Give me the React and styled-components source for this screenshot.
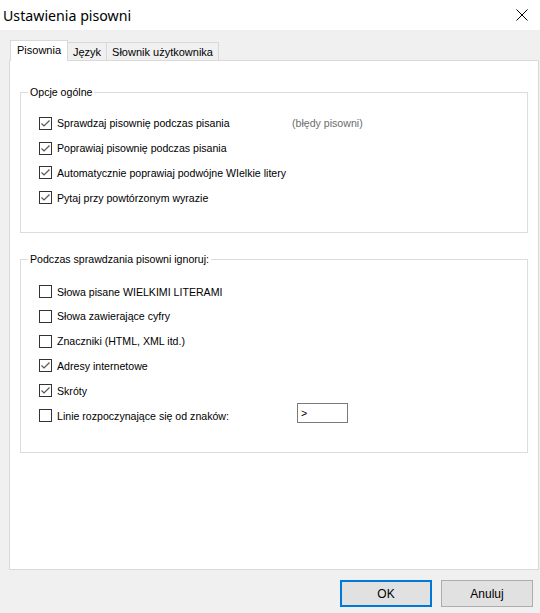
import styled, { createGlobalStyle } from 'styled-components';

const GlobalStyle = createGlobalStyle`
	body {
		margin: 0;
		font-family: "Liberation Sans", Arial, sans-serif;
		font-size: 10.6px;
		color: #000;
	}
`;

const Window = styled.div`
	width: 540px;
	height: 613px;
	background: #f0f0f0;
	display: flex;
	flex-direction: column;
`;

const TitleBar = styled.div`
	height: 30px;
	background: #ffffff;
	display: flex;
	align-items: center;
	justify-content: space-between;
	padding-left: 3px;
	flex-shrink: 0;

	h1 {
		margin: 0;
		font-family: "Noto Sans", "Open Sans", sans-serif;
		font-weight: 400;
		font-size: 14.2px;
		color: #000;
	}
`;

const CloseBtn = styled.div`
	width: 46px;
	height: 30px;
	display: flex;
	align-items: center;
	justify-content: center;
	margin-right: -5px;
`;

const Body = styled.div`
	flex: 1;
	display: flex;
	flex-direction: column;
	padding: 10px 1px 0 9px;
`;

const TabStrip = styled.div`
	height: 20px;
	display: flex;
	align-items: flex-end;
	padding-left: 1px;
`;

const Tab = styled.div`
	position: relative;
	z-index: ${(p) => (p.$active ? 1 : 0)};
	box-sizing: border-box;
	width: ${(p) => p.$w}px;
	height: ${(p) => (p.$active ? 21 : 18)}px;
	margin-bottom: ${(p) => (p.$active ? -1 : 0)}px;
	background: ${(p) => (p.$active ? '#ffffff' : '#f0f0f0')};
	border: 1px solid #d9d9d9;
	border-bottom: none;
	border-left: ${(p) => (p.$first ? '1px solid #d9d9d9' : 'none')};
	display: flex;
	align-items: center;
	justify-content: center;
	padding-bottom: ${(p) => (p.$active ? 2 : 0)}px;
	white-space: nowrap;
	font-size: 11px;
`;

const Panel = styled.div`
	flex: 1;
	background: #ffffff;
	border: 1px solid #d9d9d9;
	padding: 25px 10px 0 10px;
	display: flex;
	flex-direction: column;
	gap: 20px;
`;

const Group = styled.fieldset`
	margin: 0;
	border: 1px solid #dcdcdc;
	padding: ${(p) => p.$pad};
	min-width: 0;

	legend {
		margin-left: 7px;
		padding: 0 2px;
		line-height: 13px;
	}
`;

const Row = styled.label`
	height: 24.8px;
	display: flex;
	align-items: center;
	padding-left: 18px;
	white-space: nowrap;
`;

const Box = styled.span`
	width: 13px;
	height: 13px;
	box-sizing: border-box;
	border: 1px solid #333333;
	background: #ffffff;
	display: inline-flex;
	align-items: center;
	justify-content: center;
	margin-right: 5px;
	flex-shrink: 0;
`;

const Text = styled.span`
	display: inline-block;
	width: ${(p) => (p.$w ? `${p.$w}px` : 'auto')};
`;

const Hint = styled.span`
	color: #6d6d6d;
`;

const CharInput = styled.div`
	width: 51px;
	height: 20px;
	box-sizing: border-box;
	border: 1px solid #7a7a7a;
	padding-left: 3px;
	display: flex;
	align-items: center;
	margin-bottom: 6px;
`;

const Footer = styled.div`
	height: 43px;
	flex-shrink: 0;
	display: flex;
	justify-content: flex-end;
	align-items: flex-start;
	padding: 10px 7px 0 0;
	gap: 9px;
	box-sizing: border-box;
`;

const Button = styled.div`
	width: 92px;
	height: 27px;
	box-sizing: border-box;
	background: #e1e1e1;
	border: ${(p) => (p.$primary ? '2px solid #0078d7' : '1px solid #adadad')};
	display: flex;
	align-items: center;
	justify-content: center;
	font-size: 12px;
`;

function Check({ checked }) {
	return (
		<Box>
			{checked && (
				<svg width="11" height="11" viewBox="0 0 11 11">
					<polyline points="1.5,5.5 4,8 9.5,2.5" fill="none" stroke="#555" strokeWidth="1.2" />
				</svg>
			)}
		</Box>
	);
}

export default function App() {
	return (
		<>
			<GlobalStyle />
			<Window>
				<TitleBar>
					<h1>Ustawienia pisowni</h1>
					<CloseBtn>
						<svg width="12" height="12" viewBox="0 0 12 12">
							<path d="M0.5 0.5 L11.5 11.5 M11.5 0.5 L0.5 11.5" stroke="#000" strokeWidth="1" />
						</svg>
					</CloseBtn>
				</TitleBar>
				<Body>
					<TabStrip>
						<Tab $active $first $w={58}>Pisownia</Tab>
						<Tab $w={39}>Język</Tab>
						<Tab $w={112}>Słownik użytkownika</Tab>
					</TabStrip>
					<Panel>
						<Group $pad="12px 0 22px 0">
							<legend>Opcje ogólne</legend>
							<Row>
								<Check checked />
								<Text $w={235}>Sprawdzaj pisownię podczas pisania</Text>
								<Hint>(błędy pisowni)</Hint>
							</Row>
							<Row>
								<Check checked />
								<Text>Poprawiaj pisownię podczas pisania</Text>
							</Row>
							<Row>
								<Check checked />
								<Text>Automatycznie poprawiaj podwójne WIelkie litery</Text>
							</Row>
							<Row>
								<Check checked />
								<Text>Pytaj przy powtórzonym wyrazie</Text>
							</Row>
						</Group>
						<Group $pad="13px 0 24px 0">
							<legend>Podczas sprawdzania pisowni ignoruj:</legend>
							<Row>
								<Check />
								<Text>Słowa pisane WIELKIMI LITERAMI</Text>
							</Row>
							<Row>
								<Check />
								<Text>Słowa zawierające cyfry</Text>
							</Row>
							<Row>
								<Check />
								<Text>Znaczniki (HTML, XML itd.)</Text>
							</Row>
							<Row>
								<Check checked />
								<Text>Adresy internetowe</Text>
							</Row>
							<Row>
								<Check checked />
								<Text>Skróty</Text>
							</Row>
							<Row>
								<Check />
								<Text $w={240}>Linie rozpoczynające się od znaków:</Text>
								<CharInput>&gt;</CharInput>
							</Row>
						</Group>
					</Panel>
				</Body>
				<Footer>
					<Button $primary>OK</Button>
					<Button>Anuluj</Button>
				</Footer>
			</Window>
		</>
	);
}
